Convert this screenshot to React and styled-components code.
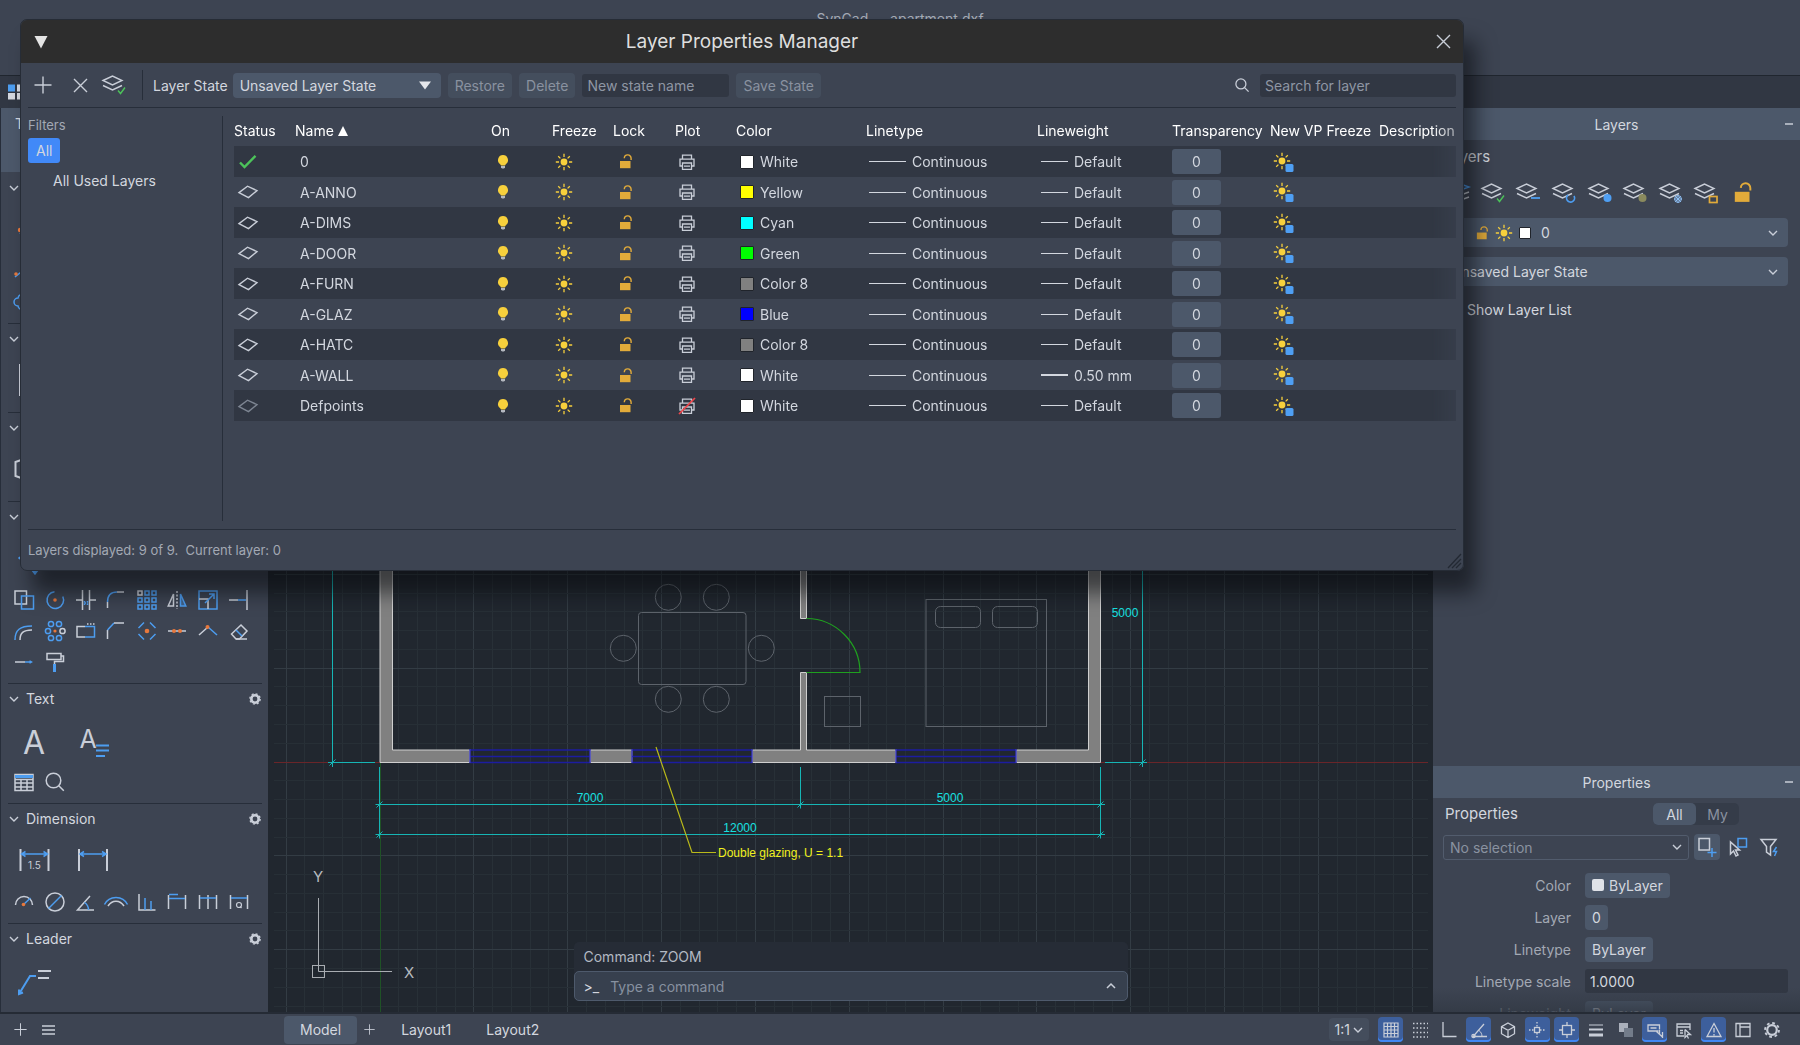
import React from 'react';
import styled, { createGlobalStyle } from 'styled-components';

const c = {
  panel: '#3d4452', deep: '#313743', header: '#4c586a', line: '#272e3a', canvas: '#21272f',
  text: '#d3d7df', dim: '#a3a9b4', mute: '#8a92a0', white: '#c9ced8', blue: '#4d9df0',
  orange: '#e8783c', sun: '#f7d03c', lock: '#e2ab3a', green: '#4cc35a', cyan: '#16b5b5',
};

const Global = createGlobalStyle`
  * { box-sizing: border-box; }
  body { margin: 0; background: ${c.panel}; overflow: hidden; }
  body, button, input, select { font-family: Inter, "Liberation Sans", sans-serif; font-size: 14px; color: ${c.text}; }
  button, input, select { border: 0; margin: 0; padding: 0; background: none; outline: none; appearance: none; }
  svg { display: block; flex: none; }
`;

const Page = styled.div`display: flex; flex-direction: column; height: 100vh; background: ${c.panel};`;
const TitleBar = styled.header`
  height: 75px; display: flex; justify-content: center; align-items: flex-start;
  padding-top: 9px; line-height: 20px; color: ${c.dim};
`;
const DocStrip = styled.nav`
  height: 33px; display: flex; align-items: center; padding-left: 8px;
  background: ${c.deep}; border-top: 1px solid #20262f;
`;
const Main = styled.main`flex: 1; min-height: 0; display: flex;`;

/* Tool palette */
const Palette = styled.aside`
  width: 268px; flex: none; overflow: hidden; background: ${c.panel}; border-left: 1px solid ${c.line};
`;
const PaletteTab = styled.button`
  display: flex; align-items: flex-start; width: 100%; height: 64px; padding: 6px 14px;
  background: ${c.header}; line-height: 20px;
`;
const Section = styled.section`
  margin: 0 6px 0 7px; padding-bottom: 6px;
  border-top: 1px solid ${p => (p.$first ? 'transparent' : c.line)};
`;
const SectionHead = styled.div`
  height: 29px; display: flex; align-items: center; gap: 6px;
  button:last-child { margin-left: auto; }
`;
const SectionTitle = styled.h2`margin: 0; font-size: 14px; font-weight: 400; line-height: 20px;`;
const BigTools = styled.div`display: flex; height: 53px; gap: 4px;`;
const SmallTools = styled.div`
  display: grid; grid-template-columns: repeat(8, 1fr); grid-auto-rows: 31px; padding: 0 8px 0 1px;
`;
const ToolButton = styled.button`
  display: flex; align-items: center; justify-content: center;
  width: ${p => (p.$big ? '54px' : 'auto')};
`;
const IconButton = styled.button`
  display: flex; align-items: center; justify-content: center;
  width: ${p => p.$w || 24}px; height: ${p => p.$h || 24}px; border-radius: 4px;
  background: ${p => (p.$on ? c.header : 'none')};
`;

/* Drawing area */
const Canvas = styled.div`flex: 1; min-width: 0; position: relative; background: ${c.canvas}; overflow: hidden;`;
const CommandDock = styled.div`
  position: absolute; left: 50%; bottom: 11px; width: 554px; transform: translateX(-50%);
  border-radius: 5px; background: #262c36;
`;
const CommandLog = styled.div`height: 29px; padding: 0 10px; line-height: 29px; color: #b3b9c3;`;
const CommandLine = styled.div`
  display: flex; align-items: center; gap: 11px; height: 30px; padding: 0 8px 0 9px;
  background: #37404e; border: 1px solid #4e5a6c; border-radius: 5px;
`;
const CommandInput = styled.input`
  flex: 1; min-width: 0; color: ${c.text};
  &::placeholder { color: #8791a0; opacity: 1; }
`;

/* Right dock */
const Dock = styled.aside`width: 367px; flex: none; display: flex; flex-direction: column; min-height: 0;`;
const DockPanel = styled.section`
  flex: ${p => (p.$grow ? '1 1 0' : '0 0 246px')}; min-height: 0; overflow: hidden; position: relative;
`;
const DockHead = styled.div`
  display: grid; grid-template-columns: 22px 1fr 22px; align-items: center; height: 32px;
  background: ${c.header}; text-align: center;
`;
const Heading = styled.h3`margin: 0; font-size: 14px; font-weight: 400;`;
const PanelTitle = styled.h2`margin: 0; font-size: 15px; font-weight: 400; line-height: 34px;`;
const LayersBody = styled.div`padding: 0 12px 0 10px;`;
const LayerIcons = styled.div`
  display: flex; justify-content: space-between; height: 44px; align-items: center; padding: 0 34px 7px 2px;
`;
const Combo = styled.div`
  display: flex; align-items: center; height: 29px; margin-bottom: ${p => p.$mb || 0}px;
  padding: 0 10px 0 8px; gap: 6px; border-radius: 4px; background: ${c.header};
`;
const ComboSelect = styled.select`flex: 1; min-width: 0; height: 100%; color: ${p => p.$color || c.text}; padding-left: ${p => p.$pad || 0}px;`;
const CheckRow = styled.label`display: flex; align-items: center; gap: 8px; height: 46px;`;
const CheckBox = styled.input`width: 16px; height: 16px; border-radius: 3px; background: ${c.deep};`;
const Swatch = styled.span`
  width: ${p => p.$s || 14}px; height: ${p => p.$s || 14}px; flex: none;
  background: ${p => p.$c}; border: ${p => (p.$plain ? '0' : '1px solid #20242b')}; border-radius: ${p => (p.$plain ? 2 : 1)}px;
`;

const PropTop = styled.div`display: flex; align-items: center; height: 32px; padding: 0 61px 0 12px; justify-content: space-between;`;
const Segmented = styled.div`display: flex; border-radius: 5px; background: #353c49;`;
const Segment = styled.button`
  width: 43px; height: 22px; border-radius: 5px; background: ${p => (p.$on ? c.header : 'none')};
  color: ${p => (p.$on ? c.text : c.mute)};
`;
const PropPick = styled.div`display: flex; align-items: center; gap: 5px; height: 34px; padding: 0 18px 0 10px;`;
const PickBox = styled.div`
  flex: 1; display: flex; align-items: center; height: 25px; padding: 0 6px; border: 1px solid #525c6d; border-radius: 3px;
`;
const PropGrid = styled.div`
  display: grid; grid-template-columns: 138px 1fr; column-gap: 14px; grid-auto-rows: 26px; row-gap: 6px;
  align-items: center; justify-items: start; padding: 8px 12px 0 0;
`;
const PropLabel = styled.label`justify-self: end; color: ${c.dim};`;
const ValueButton = styled.button`
  display: flex; align-items: center; gap: 5px; height: 25px; padding: 0 7px; border-radius: 4px; background: ${c.header};
`;
const ValueInput = styled.input`width: 100%; min-width: 0; height: 24px; padding: 0 5px; border-radius: 3px; background: ${c.deep};`;
const Fade = styled.div`
  position: absolute; left: 0; right: 0; bottom: 0; height: 24px;
  background: linear-gradient(rgba(55, 62, 74, 0), rgba(50, 57, 68, 0.8));
`;

/* Status bar */
const StatusBar = styled.footer`
  display: flex; align-items: center; height: 33px; border-top: 2px solid #252b35; padding: 0 15px 0 8px; background: ${c.panel};
`;
const StatusLeft = styled.div`display: flex; gap: 2px; width: 276px; flex: none;`;
const LayoutTabs = styled.div`display: flex; gap: 3px; margin-left: 4px;`;
const Tab = styled.button`
  height: 28px; padding: 0 16px; border-radius: 4px; background: ${p => (p.$on ? c.header : 'none')};
`;
const StatusTools = styled.div`margin-left: auto; display: flex; align-items: center; gap: 9px;`;
const ScaleButton = styled.button`
  display: flex; align-items: center; gap: 3px; height: 23px; padding: 0 6px; border-radius: 4px; background: #444d5c;
`;
const Toggles = styled.div`display: flex; justify-content: space-between; width: 407px;`;
const Toggle = styled.button`
  display: flex; align-items: center; justify-content: center; width: 25px; height: 25px; border-radius: 4px;
  background: ${p => (p.$on ? '#3d5f9c' : 'none')};
  box-shadow: ${p => (p.$on ? 'inset 0 -2px 0 #4088f5' : 'none')};
`;

/* Layer manager window */
const Window = styled.div`
  position: absolute; left: 20px; top: 19px; right: 336px; height: 552px; display: flex; flex-direction: column;
  border: 1px solid #262c36; border-radius: 7px; background: ${c.panel}; overflow: hidden;
`;
const Shade = styled.div`
  position: absolute; left: 20px; top: 19px; right: 336px; height: 552px; border-radius: 7px;
  box-shadow: 12px 22px 20px rgba(8, 10, 12, 0.55);
`;
const WindowBar = styled.div`
  display: grid; grid-template-columns: 40px 1fr 40px; align-items: center; justify-items: center;
  height: 43px; flex: none; background: #2d2d2d;
`;
const WindowTitle = styled.h1`margin: 0; font-size: 19px; font-weight: 400; color: #dedede;`;
const Toolbar = styled.div`
  display: flex; align-items: center; height: 45px; flex: none; margin: 0 7px; border-bottom: 1px solid ${c.line};
`;
const ToolGroup = styled.div`display: flex; align-items: center; gap: ${p => p.$gap}px; margin-left: ${p => p.$ml || 0}px;`;
const Rule = styled.div`width: 1px; height: 30px; background: ${c.line}; margin: 0 10px 0 16px;`;
const StateBox = styled.div`
  display: flex; align-items: center; width: 208px; height: 25px; padding: 0 10px 0 7px; margin-left: 5px;
  border-radius: 4px; background: ${c.header};
`;
const FlatButton = styled.button`height: 25px; padding: 0 7px; border-radius: 4px; background: #444e5d; color: ${c.mute};`;
const Field = styled.input`
  width: ${p => p.$w}px; height: 23px; padding: 0 5px; border-radius: 3px; background: ${c.deep};
  &::placeholder { color: #8f96a3; opacity: 1; }
`;
const SearchGroup = styled.label`margin-left: auto; display: flex; align-items: center; gap: 11px;`;
const WindowBody = styled.div`display: flex; flex: 1; min-height: 0; margin: 0 7px; padding: 8px 0;`;
const Filters = styled.div`
  width: 195px; flex: none; border-right: 1px solid ${c.line};
  display: flex; flex-direction: column; align-items: flex-start;
`;
const FilterTitle = styled.div`height: 22px; line-height: 19px; font-size: 13px; color: ${c.dim};`;
const FilterButton = styled.button`
  height: 25px; padding: 0 8px; border-radius: 3px; background: ${p => (p.$on ? '#4189f8' : 'none')};
  margin: ${p => (p.$on ? '0 0 5px' : '0 0 0 17px')};
`;
const TableArea = styled.div`
  flex: 1; min-width: 0; margin-left: 11px; overflow: hidden;
  mask-image: linear-gradient(to left, rgba(0, 0, 0, 0.5), #000 24px);
`;
const Table = styled.table`
  width: 100%; table-layout: fixed; border-collapse: collapse; text-align: left;
  th { height: 30px; padding: 0 0 1px; font-weight: 400; color: #fff; white-space: nowrap; }
  td { height: 30px; padding: 0; white-space: nowrap; }
  tbody tr:nth-child(odd) td { height: 31px; background: ${c.deep}; }
`;
const Col = styled.col`width: ${p => (p.$w ? p.$w + 'px' : 'auto')};`;
const Cell = styled.div`display: flex; align-items: center; gap: ${p => p.$gap || 6}px; padding-left: ${p => p.$pad || 0}px;`;
const Stroke = styled.span`width: ${p => p.$w}px; height: ${p => p.$t || 1}px; background: ${c.text};`;
const Amount = styled.button`display: block; width: 49px; height: 25px; border-radius: 3px; background: ${c.header};`;
const WindowFoot = styled.div`
  display: flex; align-items: center; justify-content: space-between; height: 41px; flex: none; margin: 0 0 0 7px;
  font-size: 13px; color: ${c.dim}; position: relative;
  &::before { content: ""; position: absolute; left: 0; right: 7px; top: 0; height: 1px; background: ${c.line}; }
`;
const Grip = styled.svg`align-self: flex-end;`;

/* Icons */
const I = ({ s = 20, w = s, h = s, vb, sw = 1.5, children, ...r }) => (
  <svg width={w} height={h} viewBox={vb || `0 0 ${w} ${h}`} fill="none" stroke={c.white} strokeWidth={sw} overflow="visible" aria-hidden="true" {...r}>{children}</svg>
);
const B = { stroke: c.blue };
const Dot = ({ x, y, r = 1.8 }) => <circle cx={x} cy={y} r={r} fill={c.orange} stroke="none" />;

const ChevronDown = ({ s = 10 }) => <I w={s} h={s} vb="0 0 10 10" sw={1.4}><path d="M1 3l4 4 4-4" /></I>;
const ChevronUp = () => <I s={10} sw={1.5}><path d="M1 7l4-4 4 4" /></I>;
const Plus = ({ s = 18 }) => <I w={s} h={s} vb="0 0 18 18" sw={1.4}><path d="M9 0.5v17M.5 9h17" /></I>;
const Cross = ({ s = 15 }) => <I w={s} h={s} vb="0 0 15 15" sw={1.4}><path d="M1 1l13 13M14 1L1 14" /></I>;
const Gear = ({ s = 12, sw = 2.6 }) => (
  <I w={s} h={s} vb="0 0 12 12" sw={sw}><circle cx="6" cy="6" r="3.7" /><circle cx="6" cy="6" r="5.2" strokeWidth="1.3" strokeDasharray="2 2.08" /></I>
);
const Search = ({ s = 14 }) => <I w={s} h={s} vb="0 0 14 14" sw={1.3}><circle cx="5.9" cy="5.9" r="5" /><path d="M9.6 9.6l4 4" /></I>;
const Minus = () => <I s={8} sw={1.5}><path d="M0 4h8" /></I>;
const Sun = ({ badge }) => (
  <I w={badge ? 22 : 18} h={badge ? 20 : 18} sw={1.3} stroke={c.sun}>
    <circle cx="9" cy="9" r="3.4" fill={c.sun} stroke="none" />
    <path d="M9 .8v3.200M9 14v3.200M.8 9H4M14 9h3.200M3.200 3.200l2.200 2.200M12.6 12.6l2.200 2.200M3.200 14.8l2.200-2.200M12.6 5.4l2.200-2.200" />
    {badge && <rect x="12.5" y="12" width="8" height="8" rx="1.5" fill="#4f9ff3" stroke="none" />}
  </I>
);
const Bulb = () => (
  <I w={12} h={16} stroke="none">
    <path d="M6 1a5 5 0 0 0-3 9l1 1.6h4L9 10a5 5 0 0 0-3-9z" fill={c.sun} />
    <path d="M4 12h4v1.6l-1 1H5l-1-1z" fill="#b4b8bf" />
  </I>
);
const Lock = ({ s = 15 }) => (
  <I w={s} h={s} vb="0 0 15 15" stroke={c.lock} sw={1.4}>
    <rect x="2" y="7" width="10.500" height="7.2" fill={c.lock} stroke="none" />
    <path d="M6.300 4.2A3.4 3.4 0 0 1 13.1 4.4V6" />
  </I>
);
const Printer = ({ off }) => (
  <I s={18} sw={1.3}>
    <path d="M4.5 6.2V2.2h9v4M4.5 13H2V6.2h14V13h-2.500" /><path d="M4.500 10h9v6.300h-9zM6 13.200h6" />
    {off && <path d="M1 17L17 1" stroke="#f0454a" strokeWidth="1.7" />}
  </I>
);
const Diamond = ({ dim }) => <I w={20} h={14} sw={1.4} stroke={dim ? '#7d8592' : c.white}><path d="M1 7.600L9.500 1.200l9.500 4.400-8.500 7z" /></I>;
const Check = () => <I w={20} h={16} sw={2.400} stroke={c.green}><path d="M2 8.500l4.500 4.500L17.500 1.800" /></I>;
const Stack = ({ kind }) => (
  <I w={24} h={22} sw={1.4}>
    {kind === 'manager'
      ? <g><path d="M2 5l11-4 11 4-11 4z" {...B} /><path d="M2 10l11 4 11-4M2 15l11 4 11-4" /></g>
      : <g><path d="M1 6.500L10.500 2l9.500 4.500-9.500 4.500z" /><path d="M1 11.500l9.500 4.500 9.500-4.500" /></g>}
    {kind === 'check' && <path d="M16 16.500l2.500 3 4.500-6" stroke={c.green} />}
    {kind === 'minus' && <path d="M15 16h9" {...B} strokeWidth="1.800" />}
    {kind === 'cycle' && <path d="M22 14a4 4 0 1 1-6-1" {...B} strokeWidth="1.700" />}
    {kind === 'on' && <circle cx="19.500" cy="16" r="4" fill="#4f9ff3" stroke="none" />}
    {kind === 'off' && <circle cx="19.500" cy="16" r="4" fill="#8a8a5e" stroke="none" />}
    {kind === 'frost' && <g stroke="#8fc0f5" strokeWidth="1"><circle cx="19" cy="17" r="3.400" /><path d="M19 13v8M15 17h8M16.200 14.200l5.600 5.600M21.800 14.200l-5.600 5.600" /></g>}
    {kind === 'lock' && <rect x="15.500" y="14.500" width="7.500" height="6" stroke={c.lock} strokeWidth="1.700" />}
  </I>
);

const small = {
  line: <><path d="M1 16L17 3" {...B} /><Dot x={2} y={13} /></>,
  cloud: <path d="M4 6a4 4 0 0 1 6-3 4 4 0 0 1 6 3 4 4 0 0 1 0 8 4 4 0 0 1-6 3 4 4 0 0 1-6-3 4 4 0 0 1 0-8z" {...B} />,
  copy: <><rect x="1" y="1" width="11.500" height="13" /><rect x="7.500" y="6" width="12" height="13" {...B} /></>,
  rotate: <><path d="M17.800 6.500A8.300 8.300 0 1 1 9.500 1.800" {...B} /><Dot x={10} y={10} /></>,
  trim: <><path d="M6.500 0v20M13.500 0v20M0 10h6.500M13.500 10H20" /><path d="M8.500 11v4M11.500 11v4M8.500 13h3" {...B} strokeDasharray="1.500 1" /></>,
  fillet: <><path d="M1.500 18v-6" /><path d="M1.500 12C1.500 5 5 2 11 2" {...B} /><path d="M11 2h7" /></>,
  array: <>{[0, 1, 2].map(i => [0, 1, 2].map(j => <rect key={`${i}${j}`} x={1 + i * 7} y={1 + j * 7} width="4" height="4" stroke={i + j ? c.blue : c.white} />))}</>,
  mirror: <><path d="M6.500 4v12H1.200z" /><path d="M10 1v18" strokeDasharray="2 1.500" /><path d="M13.500 4v12h5.300z" {...B} fill={c.blue} fillOpacity=".35" /></>,
  scale: <><rect x="1" y="1" width="18" height="18" {...B} /><path d="M1 9h9v10" /><path d="M7 13l9-9M11 4h5v5" {...B} /></>,
  extend: <><path d="M0 10h9" /><path d="M9 10h8" {...B} /><path d="M18 0v20" /></>,
  offset: <><path d="M1 19C1 9 6 5 18 5" {...B} /><path d="M6 19c0-7 3-10 12-10" /></>,
  polar: <>{[[5, 3], [13, 3], [2, 10], [5, 17], [13, 17]].map(([x, y]) => <circle key={`${x}${y}`} cx={x + 1} cy={y} r="2.600" {...B} />)}<circle cx="17.500" cy="10" r="2.600" /><Dot x={10} y={10} r={1.600} /></>,
  stretch: <><path d="M9 16H1V5.500h8" /><path d="M9 5.500h9.500V16H9" {...B} /><path d="M11 3h9" strokeDasharray="1.500 1.500" /></>,
  chamfer: <><path d="M1.500 18V9" /><path d="M1.500 9l6.500-7" {...B} /><path d="M8 2h10" /></>,
  explode: <><path d="M1.500 7l5.500-5.500M18.500 7L13 1.500M1.500 13L7 18.500M18.500 13L13 18.500" {...B} /><Dot x={10} y={10} r={2.300} /></>,
  join: <><path d="M1 10h18" /><Dot x={7} y={10} r={2} /><Dot x={13} y={10} r={2} /></>,
  vertex: <><path d="M1 14l9-8" /><path d="M10 6l9 8" {...B} /><Dot x={9.500} y={6} r={2} /></>,
  erase: <><path d="M2.500 13L12 4l6 6-7.500 8H7z" /><path d="M7 9l6 6" {...B} /><path d="M7 18h11" /></>,
  lengthen: <><path d="M1 10h10" /><path d="M11 10h7M15.500 8.800l2 1.200-2 1.200" {...B} /></>,
  roller: <><path d="M2 1.500h14v6H2zM16 4h2.500v5.500H9.500V12" /><path d="M9.500 12v8" {...B} strokeWidth="3" /></>,
  table: <><rect x="1" y="2.500" width="18" height="16" /><path d="M1 4.500h18" {...B} strokeWidth="3" /><path d="M1 7.500h18M1 11h18M1 15h18M7 7v11M13 7v11" /></>,
  find: <><circle cx="8.500" cy="8.500" r="7.300" /><path d="M13.800 13.800l5 5" /></>,
  radius: <><path d="M1.500 13a8.500 8.500 0 0 1 17 0" /><path d="M9.500 12.500l7-6.500" {...B} /><Dot x={9.500} y={12.500} /></>,
  diameter: <><circle cx="10" cy="10" r="9" /><path d="M3.500 16.500l13-13" {...B} /></>,
  angle: <><path d="M14 4L1.500 18H18" /><path d="M8.500 10.500a9 9 0 0 1 4 7.500" {...B} /></>,
  arc: <><path d="M-1.500 12.500C3 3 17 3 21.500 12.500" {...B} /><path d="M2 14C6 7.500 14 7.500 18 14" /></>,
  ordinate: <><path d="M2 2v16h16.500" /><path d="M8 6v12M14 9v9" {...B} /></>,
  baseline: <><path d="M1.500 3v14M18.500 3v14" /><path d="M2 2.500h9M2 6.500h16" {...B} /></>,
  chain: <><path d="M1.500 3v14M10 3v14M18.500 3v14" /><path d="M2 6h16" {...B} /></>,
  inspect: <><path d="M1.500 3v14M18.500 3v14" /><path d="M2 6h16" {...B} /><circle cx="10" cy="13" r="2.500" strokeWidth="1.200" /><path d="M11 14.500l1.500 1.500" strokeWidth="1.200" /></>,
};
const SmallIcon = ({ name }) => <I s={20}>{small[name]}</I>;

const big = {
  polyline: <><path d="M2 22L14 8h16" {...B} /><Dot x={2} y={18} r={2.200} /></>,
  hatch: <><rect x="2" y="2" width="30" height="30" strokeWidth="2" /><path d="M2 32h30" {...B} strokeWidth="2" /></>,
  box: <path d="M-2.500 10L17 3l19 7v14l-19 7-19.500-7z" strokeWidth="2" />,
  move: <><path d="M17 3v28M3 17h28" /><path d="M14 5l3-4 3 4zM14 29l3 4 3-4zM5 14l-4 3 4 3zM29 14l4 3-4 3z" {...B} fill={c.blue} /></>,
  mtext: <text x="16" y="31" fontSize="32" textAnchor="middle" fill={c.white} stroke="none">A</text>,
  note: <><text x="12" y="25" fontSize="25" textAnchor="middle" fill={c.white} stroke="none">A</text><path d="M20 22.500h13M20 27.500h13M20 33h9" {...B} strokeWidth="2" /></>,
  dimText: <><path d="M2.500 6v22M30.500 6v22" strokeWidth="2" /><path d="M3.500 11h26M7.500 8.500L3.500 11l4 2.500M25.500 8.500l4 2.500-4 2.500" {...B} /><text x="16.500" y="26" fontSize="10" textAnchor="middle" fill={c.white} stroke="none">1.5</text></>,
  dim: <><path d="M3 6v22M31 6v22" strokeWidth="2" /><path d="M4 11h26M8 8.500L4 11l4 2.500M26 8.500l4 2.500-4 2.500" {...B} /></>,
  leader: <><path d="M1 31L12 13h6M1 26.500V31l4-1.500" {...B} strokeWidth="2" /><path d="M20 8h13M20 15h11" strokeWidth="2" /></>,
};
const BigIcon = ({ name }) => <I s={34}>{big[name]}</I>;

const status = {
  grid: <path d="M1 1h14v14H1zM4.500 1v14M8 1v14M11.500 1v14M1 4.500h14M1 8h14M1 11.500h14" strokeWidth="1.200" />,
  snap: <path d="M1 1.500h15M1 6h15M1 10.500h15M1 15h15" strokeDasharray="1.500 2" />,
  ortho: <path d="M2 0v14.500h13.500" />,
  polar: <><path d="M13 2L2 14.500h14" /><path d="M8 8.500c2 1.500 3 3.500 3 6" strokeWidth="1" /><circle cx="2.500" cy="14" r="1.600" /></>,
  iso: <path d="M8 1l6.500 3.700v7L8 15.500l-6.500-3.800v-7zM1.500 4.700L8 8.300l6.500-3.600M8 8.300v7.200" />,
  track: <><rect x="5.500" y="5.500" width="5" height="5" /><path d="M8 0v5M8 11v5" strokeDasharray="1.500 1.500" /><path d="M0 8h5M11 8h5" strokeDasharray="1.500 1.500" /></>,
  osnap: <><rect x="3.500" y="3.500" width="9" height="9" /><path d="M8 0v4M8 12v4M0 8h4M12 8h4" /></>,
  weight: <><path d="M1 3h14" strokeWidth="1" /><path d="M1 7.500h14" strokeWidth="2" /><path d="M1 13h14" strokeWidth="3" /></>,
  transp: <g stroke="none"><rect x="1" y="1" width="9" height="9" fill="#aab0bb" /><rect x="6" y="6" width="9" height="9" fill="#737c8a" /></g>,
  cycle: <path d="M11.500 9H1V3h11.500v4M3.500 6h6M9.500 9.500L15.500 15M12.500 7.500V13M15.500 10v6" />,
  quick: <><path d="M8 14H1V2h13v6M1 5h13M4 8.500h3M4 11h3" /><path d="M9 7.500v8l2-2 1.500 3M9 7.500l5.500 5H11" fill={c.panel} /></>,
  monitor: <path d="M8 1.500L15 14.500H1zM8 6v4.500M8 12v1.500" />,
  layout: <path d="M1 1.500h14v13H1zM5 1.500v13M5 5h10" />,
  gear: <><circle cx="8" cy="8" r="4.800" strokeWidth="2.200" /><circle cx="8" cy="8" r="7" strokeWidth="1.800" strokeDasharray="2.750 2.750" /></>,
};

const sections = [
  { id: 'draw', first: true, big: ['polyline'], small: ['line', '', '', '', '', '', '', '', 'cloud'] },
  { id: 'hatch', big: ['hatch'] },
  { id: 'block', big: ['box'] },
  { id: 'modify', big: ['move'], small: ['copy', 'rotate', 'trim', 'fillet', 'array', 'mirror', 'scale', 'extend', 'offset', 'polar', 'stretch', 'chamfer', 'explode', 'join', 'vertex', 'erase', 'lengthen', 'roller'] },
  { id: 'text', title: 'Text', big: ['mtext', 'note'], small: ['table', 'find'] },
  { id: 'dimension', title: 'Dimension', big: ['dimText', 'dim'], small: ['radius', 'diameter', 'angle', 'arc', 'ordinate', 'baseline', 'chain', 'inspect'] },
  { id: 'leader', title: 'Leader', big: ['leader'] },
];

const layers = [
  ['0', '#ffffff', 'White'], ['A-ANNO', '#ffff00', 'Yellow'], ['A-DIMS', '#00ffff', 'Cyan'],
  ['A-DOOR', '#00ff00', 'Green'], ['A-FURN', '#808080', 'Color 8'], ['A-GLAZ', '#0000ff', 'Blue'],
  ['A-HATC', '#808080', 'Color 8'], ['A-WALL', '#ffffff', 'White', '0.50 mm'], ['Defpoints', '#ffffff', 'White'],
];

const columns = [
  ['Status', 61], ['Name', 196], ['On', 61], ['Freeze', 61], ['Lock', 62], ['Plot', 61], ['Color', 130],
  ['Linetype', 171], ['Lineweight', 135], ['Transparency', 98], ['New VP Freeze', 109], ['Description', 0],
];

function gridLines() {
  const out = [];
  const step = 18.77;
  for (let i = -5; i < 56; i++) {
    const x = Math.floor(380 + i * step) + 0.5;
    out.push(<path key={`v${i}`} d={`M${x} 108V1013`} stroke={i % 5 ? '#283037' : '#333c44'} />);
  }
  for (let j = -34; j < 14; j++) {
    const y = Math.floor(762 + j * step) + 0.5;
    out.push(<path key={`h${j}`} d={`M274 ${y}H1428`} stroke={j % 5 ? '#272f36' : '#333c44'} />);
  }
  return out;
}

const Tick = ({ x, y }) => <path d={`M${x - 3} ${y + 3}l6 -6M${x - 4} ${y}h8M${x} ${y - 4}v8`} />;
const GlassPane = ({ x, w }) => (
  <g stroke="#1c1ca0" strokeWidth="1.5">
    <path d={`M${x} 750h${w}M${x} 756.500h${w}M${x} 762.500h${w}`} />
    <path d={`M${x} 749v14M${x + w} 749v14`} stroke="#3434b4" />
  </g>
);

function Drawing() {
  return (
    <svg width="100%" height="100%" fill="none" role="img" aria-label="Apartment floor plan">
      <g transform="translate(-268 -108)">
        {gridLines()}
        <path d="M274 762.500H1428" stroke="#6a2529" />
        <path d="M380.500 762V1013" stroke="#1f5226" />
        <g fill="#808080" stroke="#cfcfcf">
          <path d="M380 300V762.500H469.500V750H392.500V300z" />
          <path d="M590.500 750h41.500v12.500h-41.500z" />
          <path d="M752.500 750H800.500V672.500h6V750H895.500V762.500H752.500z" />
          <path d="M1016.500 750H1088.500V300H1100.500V762.500H1016.500z" />
          <path d="M800.500 300V618.500h6V300z" />
        </g>
        <GlassPane x={470} w={120} /><GlassPane x={632} w={120} /><GlassPane x={896} w={120} />
        <path d="M806.500 618.500A54 54 0 0 1 860 672.500H806.500" stroke="#1fa01f" strokeWidth="1.200" />
        <g stroke="#5d636b">
          <rect x="638.500" y="612.500" width="107.500" height="72" rx="3" />
          {[[668, 597], [716, 597], [623, 648], [761, 648], [668, 699], [716, 699]].map(([x, y]) => <circle key={`${x}-${y}`} cx={x + 0.300} cy={y + 0.300} r="13" />)}
          <rect x="824.500" y="696.500" width="36" height="30" />
          <rect x="926" y="599.500" width="120.500" height="127" />
          <rect x="935.500" y="606.500" width="45" height="21" rx="5" />
          <rect x="992.500" y="606.500" width="45" height="21" rx="5" />
        </g>
        <g stroke={c.cyan}>
          <path d="M332.500 300V767M328 762.500H375M1142.500 300V767M1105 762.500H1147" />
          <path d="M379.500 767V838M800.500 767V808M1100.500 767V838M376 804.500H1105M376 834.500H1105" />
          <Tick x={332.500} y={762.500} /><Tick x={1142.500} y={762.500} />
          <Tick x={379.500} y={804.500} /><Tick x={800.500} y={804.500} /><Tick x={1100.500} y={804.500} />
          <Tick x={379.500} y={834.500} /><Tick x={1100.500} y={834.500} />
        </g>
        <g fill="#18e0e0" fontFamily="Liberation Sans, Arial, sans-serif" fontSize="12" textAnchor="middle">
          <text x="590" y="802">7000</text><text x="950" y="802">5000</text>
          <text x="740" y="832">12000</text><text x="1125" y="617">5000</text>
        </g>
        <path d="M656 747L692 852.500H716" stroke="#b9b91a" strokeWidth="1.200" />
        <text x="718" y="857" fill="#f0f01e" fontFamily="Liberation Sans, Arial, sans-serif" fontSize="12">Double glazing, U = 1.1</text>
        <g stroke="#a9adb2">
          <path d="M318.500 898V971.500H392" /><rect x="312.500" y="965.500" width="12" height="12" />
        </g>
        <g fill="#b5b9bf" fontSize="15" textAnchor="middle">
          <text x="318" y="882">Y</text><text x="409" y="978">X</text>
        </g>
      </g>
    </svg>
  );
}

function ToolPalette() {
  return (
    <Palette>
      <PaletteTab>Tools</PaletteTab>
      {sections.map(s => (
        <Section key={s.id} $first={s.first}>
          <SectionHead>
            <IconButton $w={12} aria-label={`Collapse ${s.id}`}><ChevronDown /></IconButton>
            {s.title && <SectionTitle>{s.title}</SectionTitle>}
            <IconButton $w={14} aria-label={`${s.id} settings`}><Gear /></IconButton>
          </SectionHead>
          <BigTools>{s.big.map(n => <ToolButton $big key={n} aria-label={n}><BigIcon name={n} /></ToolButton>)}</BigTools>
          {s.small && (
            <SmallTools>
              {s.small.map((n, i) => (n ? <ToolButton key={n} aria-label={n}><SmallIcon name={n} /></ToolButton> : <span key={i} />))}
            </SmallTools>
          )}
        </Section>
      ))}
    </Palette>
  );
}

function RightDock() {
  return (
    <Dock>
      <DockPanel $grow>
        <DockHead><span /><Heading>Layers</Heading><IconButton $w={22} aria-label="Collapse layers"><Minus /></IconButton></DockHead>
        <LayersBody>
          <PanelTitle>Layers</PanelTitle>
          <LayerIcons>
            {['manager', 'check', 'minus', 'cycle', 'on', 'off', 'frost', 'lock'].map(k => (
              <IconButton key={k} aria-label={`Layer ${k}`}><Stack kind={k} /></IconButton>
            ))}
            <IconButton aria-label="Unlock layer"><Lock s={21} /></IconButton>
          </LayerIcons>
          <Combo $mb={10}>
            <Bulb /><span /><Lock s={14} /><Sun /><Swatch $c="#fff" $s={12} />
            <ComboSelect $pad={4} aria-label="Current layer"><option>0</option></ComboSelect><ChevronDown />
          </Combo>
          <Combo>
            <ComboSelect aria-label="Layer state"><option>Unsaved Layer State</option></ComboSelect><ChevronDown />
          </Combo>
          <CheckRow><CheckBox type="checkbox" />Show Layer List</CheckRow>
        </LayersBody>
      </DockPanel>
      <DockPanel>
        <DockHead><span /><Heading>Properties</Heading><IconButton $w={22} aria-label="Collapse properties"><Minus /></IconButton></DockHead>
        <PropTop>
          <PanelTitle>Properties</PanelTitle>
          <Segmented><Segment $on>All</Segment><Segment>My</Segment></Segmented>
        </PropTop>
        <PropPick>
          <PickBox><ComboSelect $color={c.mute} aria-label="Selection"><option>No selection</option></ComboSelect><ChevronDown /></PickBox>
          <IconButton $on $w={26} $h={26} aria-label="Add to selection"><I s={20}><rect x="2" y="1.500" width="10.500" height="11.500" /><path d="M15 11v9M10.500 15.500h9" {...B} /></I></IconButton>
          <IconButton $w={26} aria-label="Select objects"><I s={20}><rect x="10" y="1.500" width="8.500" height="8.500" {...B} /><path d="M2.500 5v12l3-3 2.500 5 2-1-2.500-5h4z" /></I></IconButton>
          <IconButton $w={26} aria-label="Quick select"><I s={20}><path d="M2 2.500h15l-5.500 7V18l-4-3V9.500z" /><path d="M17.500 10l-3 4.500h3L15.500 19" {...B} /></I></IconButton>
        </PropPick>
        <PropGrid>
          <PropLabel htmlFor="p-color">Color</PropLabel>
          <ValueButton id="p-color"><Swatch $plain $s={12} $c="#dfe2e8" />ByLayer</ValueButton>
          <PropLabel htmlFor="p-layer">Layer</PropLabel><ValueButton id="p-layer">0</ValueButton>
          <PropLabel htmlFor="p-lt">Linetype</PropLabel><ValueButton id="p-lt">ByLayer</ValueButton>
          <PropLabel htmlFor="p-lts">Linetype scale</PropLabel><ValueInput id="p-lts" defaultValue="1.0000" />
          <PropLabel htmlFor="p-lw">Lineweight</PropLabel><ValueButton id="p-lw">ByLayer</ValueButton>
        </PropGrid>
        <Fade />
      </DockPanel>
    </Dock>
  );
}

function LayerManager() {
  return (
    <Window role="dialog" aria-label="Layer Properties Manager">
      <WindowBar>
        <IconButton aria-label="Collapse window"><I s={14} stroke="none"><path d="M.5 1h13L7 13.500z" fill="#e4e4e4" /></I></IconButton>
        <WindowTitle>Layer Properties Manager</WindowTitle>
        <IconButton aria-label="Close"><Cross /></IconButton>
      </WindowBar>
      <Toolbar>
        <ToolGroup $gap={10}>
          <IconButton $w={30} aria-label="New layer"><Plus /></IconButton>
          <IconButton aria-label="Delete layer"><Cross /></IconButton>
          <IconButton aria-label="Set current"><Stack kind="check" /></IconButton>
        </ToolGroup>
        <Rule />
        <label htmlFor="layer-state">Layer State</label>
        <StateBox>
          <ComboSelect id="layer-state"><option>Unsaved Layer State</option></ComboSelect>
          <I w={12} h={9} stroke="none"><path d="M0 .5h12L6 8.500z" fill="#e4e6ea" /></I>
        </StateBox>
        <ToolGroup $gap={7} $ml={7}>
          <FlatButton disabled>Restore</FlatButton>
          <FlatButton disabled>Delete</FlatButton>
          <Field $w={147} placeholder="New state name" aria-label="New state name" />
          <FlatButton disabled>Save State</FlatButton>
        </ToolGroup>
        <SearchGroup><Search /><Field $w={196} placeholder="Search for layer" aria-label="Search for layer" /></SearchGroup>
      </Toolbar>
      <WindowBody>
        <Filters>
          <FilterTitle>Filters</FilterTitle>
          <FilterButton $on>All</FilterButton>
          <FilterButton>All Used Layers</FilterButton>
        </Filters>
        <TableArea>
          <Table>
            <colgroup>{columns.map(([n, w]) => <Col key={n} $w={w} />)}</colgroup>
            <thead>
              <tr>
                {columns.map(([n]) => (
                  <th key={n}>{n === 'Name'
                    ? <Cell $gap={4}>Name<I w={10} h={10} stroke="none"><path d="M5 0l5 10H0z" fill="#fff" /></I></Cell>
                    : n}</th>
                ))}
              </tr>
            </thead>
            <tbody>
              {layers.map(([name, color, label, weight], i) => (
                <tr key={name}>
                  <td><Cell $pad={4}>{i === 0 ? <Check /> : <Diamond dim={i === 8} />}</Cell></td>
                  <td><Cell $pad={5}>{name}</Cell></td>
                  <td><IconButton aria-label="On"><Bulb /></IconButton></td>
                  <td><IconButton aria-label="Freeze"><Sun /></IconButton></td>
                  <td><IconButton aria-label="Lock"><Lock /></IconButton></td>
                  <td><IconButton aria-label="Plot"><Printer off={i === 8} /></IconButton></td>
                  <td><Cell $pad={4}><Swatch $c={color} />{label}</Cell></td>
                  <td><Cell $pad={3}><Stroke $w={37} />Continuous</Cell></td>
                  <td><Cell $pad={4}><Stroke $w={27} $t={weight ? 2 : 1} />{weight || 'Default'}</Cell></td>
                  <td><Amount>0</Amount></td>
                  <td><Cell $pad={3}><Sun badge /></Cell></td>
                  <td />
                </tr>
              ))}
            </tbody>
          </Table>
        </TableArea>
      </WindowBody>
      <WindowFoot>
        <span>Layers displayed: 9 of 9.&nbsp; Current layer: 0</span>
        <Grip width="16" height="18" fill="none" stroke="#232933" strokeWidth="1.300"><path d="M1 16L14 2M5 16l9-9M9 16l5-5" /></Grip>
      </WindowFoot>
    </Window>
  );
}

const active = ['grid', 'polar', 'track', 'osnap', 'cycle', 'monitor'];

export default function App() {
  return (
    <Page>
      <Global />
      <TitleBar>SynCad — apartment.dxf</TitleBar>
      <DocStrip>
        <IconButton $w={16} aria-label="Home">
          <I s={16} stroke="none"><rect width="7" height="7" y=".5" fill={c.blue} /><rect x="9" y=".5" width="7" height="7" fill={c.text} /><rect y="9" width="7" height="6.500" fill={c.text} /><rect x="9" y="9" width="7" height="6.500" fill={c.text} /></I>
        </IconButton>
      </DocStrip>
      <Main>
        <ToolPalette />
        <Canvas>
          <Drawing />
          <CommandDock>
            <CommandLog>Command: ZOOM</CommandLog>
            <CommandLine>
              <span>&gt;_</span><CommandInput placeholder="Type a command" aria-label="Command" />
              <IconButton $w={16} aria-label="History"><ChevronUp /></IconButton>
            </CommandLine>
          </CommandDock>
        </Canvas>
        <RightDock />
      </Main>
      <StatusBar>
        <StatusLeft>
          <IconButton aria-label="New"><Plus s={13} /></IconButton>
          <IconButton $w={28} aria-label="Menu"><I w={13} h={12}><path d="M0 2h13M0 6h13M0 10h13" /></I></IconButton>
        </StatusLeft>
        <Tab $on>Model</Tab>
        <IconButton aria-label="Add layout"><Plus s={11} /></IconButton>
        <LayoutTabs><Tab>Layout1</Tab><Tab>Layout2</Tab></LayoutTabs>
        <StatusTools>
          <ScaleButton>1:1<ChevronDown /></ScaleButton>
          <Toggles>
            {Object.keys(status).map(k => (
              <Toggle key={k} $on={active.includes(k)} aria-label={k}><I s={16} sw={1.300}>{status[k]}</I></Toggle>
            ))}
          </Toggles>
        </StatusTools>
      </StatusBar>
      <Shade />
      <LayerManager />
    </Page>
  );
}
